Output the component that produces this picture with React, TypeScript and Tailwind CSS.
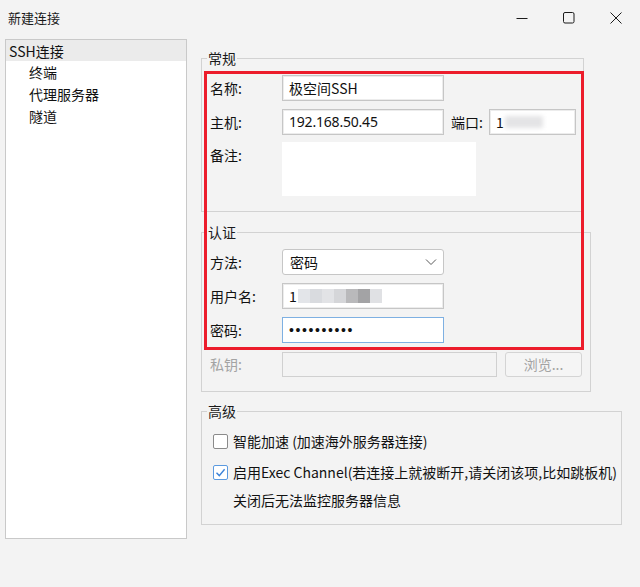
import React from "react";

function Field({ className = "", children }: { className?: string; children?: React.ReactNode }) {
  return (
    <div
      className={
        "h-[26px] bg-white border border-[#c6c6c6] shadow-[inset_0_0_0_1px_#ececec] flex items-center pl-[6px] " +
        className
      }
    >
      {children}
    </div>
  );
}

function Legend({ children }: { children: React.ReactNode }) {
  return <legend className="ml-[5px] px-[1px] leading-[20px] text-[14px] text-[#1a1a1a]">{children}</legend>;
}

function CheckBox({ checked }: { checked?: boolean }) {
  return checked ? (
    <div className="w-[15px] h-[15px] rounded-[2px] border border-[#5b9ae0] bg-white flex items-center justify-center">
      <svg width="11" height="11" viewBox="0 0 11 11" fill="none">
        <path d="M1.5 5.8 L4.3 8.6 L9.6 2.2" stroke="#3c83d8" strokeWidth="1.4" />
      </svg>
    </div>
  ) : (
    <div className="w-[15px] h-[15px] rounded-[2px] border border-[#8a8a8a] bg-white" />
  );
}

export default function App() {
  const mosaic = ["#e3e5e9", "#d9dbdf", "#e2e3e6", "#d5d6d9", "#b9b9bb", "#a3a3a5", "#e0e1e4"];
  return (
    <div className="relative w-[640px] h-[587px] overflow-hidden bg-[#f3f3f3] text-[14px] leading-[20px] text-[#111] font-['Noto_Sans_CJK_SC','Noto_Sans',sans-serif]">
      {/* Title bar */}
      <div className="h-[36px] flex items-center pl-[8px]">
        <span className="text-[13px] text-[#1a1a1a]">新建连接</span>
        <div className="ml-auto mr-[1px] flex h-full">
          <div className="w-[47px] h-full flex items-center justify-center">
            <svg width="12" height="12" viewBox="0 0 12 12">
              <path d="M0.5 6.5 H11.5" stroke="#1b1b1b" strokeWidth="1" />
            </svg>
          </div>
          <div className="w-[47px] h-full flex items-center justify-center">
            <svg width="12" height="12" viewBox="0 0 12 12" fill="none">
              <rect x="0.5" y="0.5" width="10.5" height="10.5" rx="1.5" stroke="#1b1b1b" strokeWidth="1" />
            </svg>
          </div>
          <div className="w-[47px] h-full flex items-center justify-center">
            <svg width="12" height="12" viewBox="0 0 12 12" fill="none">
              <path d="M0.5 0.5 L11.5 11.5 M11.5 0.5 L0.5 11.5" stroke="#1b1b1b" strokeWidth="1" />
            </svg>
          </div>
        </div>
      </div>

      {/* Content */}
      <div className="flex pl-[5px] pt-[3px]">
        {/* Tree */}
        <div className="w-[182px] h-[500px] bg-white border border-[#c9c9c9]">
          <div className="h-[21px] bg-[#ebebeb] pl-[3px] flex items-center">SSH连接</div>
          <div className="h-[22px] pl-[23px] flex items-center">终端</div>
          <div className="h-[22px] pl-[23px] flex items-center">代理服务器</div>
          <div className="h-[22px] pl-[23px] flex items-center">隧道</div>
        </div>

        {/* Right column */}
        <div className="ml-[14px] flex flex-col">
          {/* 常规 */}
          <fieldset className="mt-[9px] w-[383px] border border-[#d2d2d2] m-0 p-0 min-w-0">
            <Legend>常规</Legend>
            <div className="pl-[8px] pt-[7px] pb-[15px] flex flex-col">
              <div className="flex items-center h-[26px]">
                <span className="w-[72px]">名称:</span>
                <Field className="w-[162px]">极空间SSH</Field>
              </div>
              <div className="flex items-center h-[26px] mt-[8px]">
                <span className="w-[72px]">主机:</span>
                <Field className="w-[162px] font-['Noto_Sans',sans-serif] tracking-[-0.2px]">192.168.50.45</Field>
                <span className="ml-[7px] w-[38px]">端口:</span>
                <Field className="w-[87px]">
                  <span>1</span>
                  <span className="ml-[1px] w-[38px] h-[12px] bg-[#e4e4e6] blur-[2px]" />
                </Field>
              </div>
              <div className="flex mt-[7px]">
                <span className="w-[72px] pt-[3px]">备注:</span>
                <div className="w-[194px] h-[54px] bg-white" />
              </div>
            </div>
          </fieldset>

          {/* 认证 */}
          <fieldset className="mt-[10px] w-[390px] border border-[#d2d2d2] m-0 p-0 min-w-0">
            <Legend>认证</Legend>
            <div className="pl-[8px] pt-[7px] pb-[14px] flex flex-col">
              <div className="flex items-center h-[26px]">
                <span className="w-[72px]">方法:</span>
                <div className="w-[162px] h-[26px] bg-white border border-[#c6c6c6] rounded-[3px] flex items-center pl-[7px] pr-[6px]">
                  <span>密码</span>
                  <svg className="ml-auto" width="12" height="8" viewBox="0 0 12 8" fill="none">
                    <path d="M1 1.5 L6 6.5 L11 1.5" stroke="#5a5a5a" strokeWidth="1" />
                  </svg>
                </div>
              </div>
              <div className="flex items-center h-[26px] mt-[8px]">
                <span className="w-[72px]">用户名:</span>
                <Field className="w-[162px]">
                  <span>1</span>
                  <div className="ml-[1px] flex h-[14px]">
                    {mosaic.map((c, i) => (
                      <div key={i} className="w-[12px] h-[14px]" style={{ backgroundColor: c }} />
                    ))}
                  </div>
                </Field>
              </div>
              <div className="flex items-center h-[26px] mt-[8px]">
                <span className="w-[72px]">密码:</span>
                <div className="w-[162px] h-[26px] bg-white border border-[#7eb0e2] flex items-center pl-[6px]">
                  <span className="font-['Liberation_Sans',sans-serif] text-[14px] tracking-[1.6px]">••••••••••</span>
                </div>
              </div>
              <div className="flex items-center h-[26px] mt-[8px]">
                <span className="w-[72px] text-[#a3a3a3]">私钥:</span>
                <div className="w-[215px] h-[25px] border border-[#d0d0d0] bg-[#f3f3f3]" />
                <div className="ml-[8px] w-[77px] h-[25px] rounded-[3px] border border-[#d4d4d4] bg-[#f5f5f5] flex items-center justify-center text-[#a3a3a3]">
                  浏览...
                </div>
              </div>
            </div>
          </fieldset>

          {/* 高级 */}
          <fieldset className="mt-[9px] w-[421px] border border-[#d2d2d2] m-0 p-0 min-w-0">
            <Legend>高级</Legend>
            <div className="pl-[11px] pt-[9px] pb-[13px] flex flex-col">
              <div className="flex items-center h-[22px]">
                <CheckBox />
                <span className="ml-[5px]">智能加速 (加速海外服务器连接)</span>
              </div>
              <div className="flex items-center h-[22px] mt-[9px]">
                <CheckBox checked />
                <span className="ml-[5px] whitespace-nowrap">启用Exec Channel(若连接上就被断开,请关闭该项,比如跳板机)</span>
              </div>
              <div className="flex items-center h-[22px] mt-[6px] pl-[20px]">关闭后无法监控服务器信息</div>
            </div>
          </fieldset>
        </div>
      </div>

      {/* Red annotation rectangle */}
      <div className="absolute left-[204px] top-[71px] w-[380px] h-[279px] border-[3px] border-[#ec1c2b] pointer-events-none" />
    </div>
  );
}
